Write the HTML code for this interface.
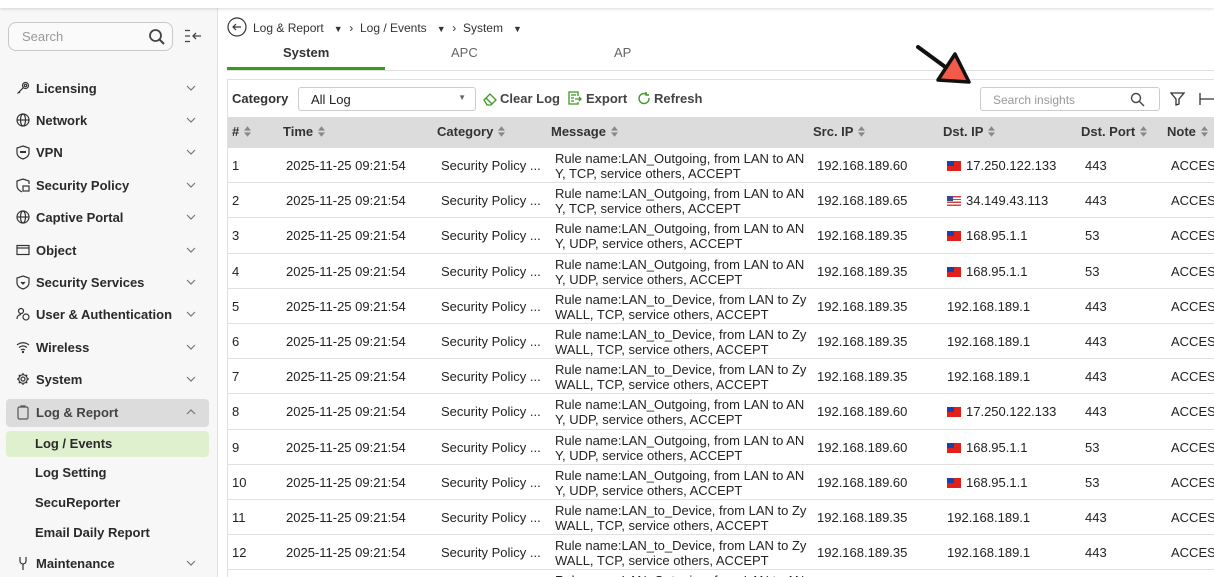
<!DOCTYPE html>
<html><head><meta charset="utf-8"><style>
*{box-sizing:border-box;margin:0;padding:0}
html,body{width:1214px;height:577px;overflow:hidden}
body{font-family:"Liberation Sans",Arial,sans-serif;background:#fff;position:relative;color:#222}
.top{position:absolute;left:0;top:0;width:1214px;height:8px;background:#fff;box-shadow:0 1px 3px rgba(0,0,0,.15);z-index:3}
.side{position:absolute;left:0;top:8px;width:218px;height:569px;background:#f7f7f7;border-right:1px solid #e2e2e2}
.sb{position:absolute;left:8px;top:22px;width:165px;height:29px;border:1px solid #c8c8c8;border-radius:8px;background:#fafafa;font-size:13px;color:#999;padding:6px 13px}
.nav{position:absolute;left:16px;font-size:13px;font-weight:bold;color:#2a2a2a;width:184px;height:16px}
.nav>svg{position:absolute;left:0;top:0}
.nav span{position:absolute;left:20px}
.nav .ch{position:absolute;left:170px;top:4px}
.sub{position:absolute;left:35px;font-size:13px;font-weight:bold;color:#2a2a2a}
.a{position:absolute}
.th{position:absolute;top:117px;left:228px;width:986px;height:31px;background:#dcdcdc}
.h{position:absolute;top:124px;font-size:13px;font-weight:bold;color:#333}
.h svg{margin-left:5px;vertical-align:-1px}
.tbl{position:absolute;left:228px;top:148px;width:986px;height:429px;overflow:hidden}
.row{position:absolute;left:0;width:986px;height:35.2px;border-bottom:1px solid #e0e0e0;font-size:13px;color:#222}
.row div{position:absolute;white-space:nowrap}
.c1{left:4px;top:10px}.c2{left:58px;top:10px}.c3{left:213px;top:10px}.c4{left:327px;top:3px;line-height:15px}.c5{left:589px;top:10px}.c6{left:719px;top:10px}.c7{left:857px;top:10px}.c8{left:943px;top:10px}
.fl{display:inline-block;width:14px;height:10px;vertical-align:-1px;margin-right:5px}
.tw{background:#e0201b;position:relative}
.tw:before{content:"";position:absolute;left:0;top:0;width:7px;height:5px;background:#1d3fa8}
.us{background:repeating-linear-gradient(#d04040 0 1.4px,#fff 1.4px 2.8px);position:relative}
.us:before{content:"";position:absolute;left:0;top:0;width:6px;height:5px;background:#3a4a8a}
</style></head><body>
<svg width="0" height="0" style="position:absolute"><defs>
<symbol id="cd" viewBox="0 0 10 6"><path d="M1 1l4 4 4-4" fill="none" stroke="#777" stroke-width="1.2"/></symbol>
<symbol id="so" viewBox="0 0 8 12"><path d="M4 0L8 5H0z M4 12L8 7H0z" fill="#888"/></symbol>
</defs></svg>
<div class="top"></div>
<div class="side"></div>
<div class="sb">Search
<svg style="position:absolute;right:6px;top:5px" width="18" height="18" viewBox="0 0 18 18"><circle cx="7.5" cy="7.5" r="5.5" fill="none" stroke="#444" stroke-width="1.8"/><path d="M11.5 11.5L16 16" stroke="#444" stroke-width="2"/></svg></div>
<svg class="a" style="left:184px;top:29px" width="20" height="14" viewBox="0 0 20 14"><path d="M1 1.5h5M1 7h5M1 12.5h5" stroke="#444" stroke-width="1.3"/><path d="M9 7h8M12 4l-3 3 3 3" stroke="#444" stroke-width="1.3" fill="none"/></svg>

<div class="nav" style="top:81px"><svg width="14" height="14" viewBox="0 0 14 14" fill="none" stroke="#333" stroke-width="1.2"><circle cx="9.5" cy="4.5" r="3"/><circle cx="9.5" cy="4.5" r="1.2"/><path d="M7.3 6.7L1.5 12.5M3 11l1 1"/></svg><span>Licensing</span><svg class="ch" width="10" height="6"><use href="#cd"/></svg></div>
<div class="nav" style="top:113px"><svg width="14" height="14" viewBox="0 0 14 14" fill="none" stroke="#333" stroke-width="1.2"><circle cx="7" cy="7" r="6"/><ellipse cx="7" cy="7" rx="2.5" ry="6"/><path d="M1 7h12"/></svg><span>Network</span><svg class="ch" width="10" height="6"><use href="#cd"/></svg></div>
<div class="nav" style="top:145px"><svg width="14" height="15" viewBox="0 0 14 15" fill="none" stroke="#333" stroke-width="1.2"><path d="M7 1l6 2v5c0 3-3 5-6 6-3-1-6-3-6-6V3z"/><path d="M4 7h6" stroke-width="2"/></svg><span>VPN</span><svg class="ch" width="10" height="6"><use href="#cd"/></svg></div>
<div class="nav" style="top:178px"><svg width="14" height="15" viewBox="0 0 14 15" fill="none" stroke="#333" stroke-width="1.2"><path d="M7 1l6 2v3M7 1L1 3v5c0 3 3 5 5 6"/><rect x="7" y="8" width="6" height="5"/></svg><span>Security Policy</span><svg class="ch" width="10" height="6"><use href="#cd"/></svg></div>
<div class="nav" style="top:210px"><svg width="14" height="14" viewBox="0 0 14 14" fill="none" stroke="#333" stroke-width="1.2"><circle cx="7" cy="7" r="6"/><ellipse cx="7" cy="7" rx="2.5" ry="6"/><path d="M1 7h12"/></svg><span>Captive Portal</span><svg class="ch" width="10" height="6"><use href="#cd"/></svg></div>
<div class="nav" style="top:243px"><svg width="14" height="14" viewBox="0 0 14 14" fill="none" stroke="#333" stroke-width="1.2"><rect x="1" y="2.5" width="12" height="9"/><path d="M1 5h12"/></svg><span>Object</span><svg class="ch" width="10" height="6"><use href="#cd"/></svg></div>
<div class="nav" style="top:275px"><svg width="14" height="15" viewBox="0 0 14 15" fill="none" stroke="#333" stroke-width="1.2"><path d="M7 1l6 2v5c0 3-3 5-6 6-3-1-6-3-6-6V3z"/><path d="M5 7l2 2 2-2" fill="#333"/></svg><span>Security Services</span><svg class="ch" width="10" height="6"><use href="#cd"/></svg></div>
<div class="nav" style="top:307px"><svg width="14" height="14" viewBox="0 0 14 14" fill="none" stroke="#333" stroke-width="1.2"><circle cx="5" cy="4" r="2.5"/><path d="M1 12c0-3 2-4.5 4-4.5"/><circle cx="10" cy="10" r="3"/></svg><span>User &amp; Authentication</span><svg class="ch" width="10" height="6"><use href="#cd"/></svg></div>
<div class="nav" style="top:340px"><svg width="14" height="14" viewBox="0 0 14 14" fill="none" stroke="#333" stroke-width="1.2"><path d="M1 5c3.5-3 8.5-3 12 0M3 7.5c2.5-2 5.5-2 8 0M5 10c1-1 3-1 4 0"/><circle cx="7" cy="12" r=".6" fill="#333"/></svg><span>Wireless</span><svg class="ch" width="10" height="6"><use href="#cd"/></svg></div>
<div class="nav" style="top:372px"><svg width="14" height="14" viewBox="0 0 14 14" fill="none" stroke="#333" stroke-width="1.2"><circle cx="7" cy="7" r="2"/><path d="M7 1v2M7 11v2M1 7h2M11 7h2M2.8 2.8l1.4 1.4M9.8 9.8l1.4 1.4M2.8 11.2l1.4-1.4M9.8 4.2l1.4-1.4"/><circle cx="7" cy="7" r="4.3"/></svg><span>System</span><svg class="ch" width="10" height="6"><use href="#cd"/></svg></div>
<div class="a" style="left:6px;top:399px;width:203px;height:28px;background:#dcdcdc;border-radius:4px"></div>
<div class="nav" style="top:405px;color:#444"><svg width="14" height="15" viewBox="0 0 14 15" fill="none" stroke="#555" stroke-width="1.2"><rect x="2" y="2" width="10" height="12" rx="1.5"/><path d="M5 2V1h4v1"/></svg><span>Log &amp; Report</span><svg class="ch" width="10" height="6" style="transform:rotate(180deg)"><use href="#cd"/></svg></div>
<div class="a" style="left:6px;top:431px;width:203px;height:26px;background:#dff0cf;border-radius:4px"></div>
<div class="sub" style="top:436px">Log / Events</div>
<div class="sub" style="top:465px">Log Setting</div>
<div class="sub" style="top:495px">SecuReporter</div>
<div class="sub" style="top:525px">Email Daily Report</div>
<div class="nav" style="top:556px"><svg width="14" height="15" viewBox="0 0 14 15" fill="none" stroke="#333" stroke-width="1.2"><path d="M4 1v4a3 3 0 006 0V1M7 8v6"/></svg><span>Maintenance</span><svg class="ch" width="10" height="6"><use href="#cd"/></svg></div>

<svg class="a" style="left:227px;top:17px" width="20" height="20" viewBox="0 0 20 20" fill="none" stroke="#333" stroke-width="1.2"><circle cx="10" cy="10" r="9"/><path d="M14 10H6M9 7l-3 3 3 3"/></svg>
<div class="a" style="left:253px;top:21px;font-size:12px;color:#333;white-space:pre">Log &amp; Report   <span style="font-size:9px">▼</span>  ›  Log / Events   <span style="font-size:9px">▼</span>  ›  System   <span style="font-size:9px">▼</span></div>
<div class="a" style="left:283px;top:45px;font-size:13px;font-weight:bold;color:#333">System</div>
<div class="a" style="left:451px;top:45px;font-size:13px;color:#666">APC</div>
<div class="a" style="left:614px;top:45px;font-size:13px;color:#666">AP</div>
<div class="a" style="left:227px;top:70px;width:987px;height:1px;background:#e0e0e0"></div>
<div class="a" style="left:227px;top:67px;width:158px;height:3px;background:#3a9a1a"></div>
<div class="a" style="left:227px;top:79px;width:987px;height:498px;border:1px solid #e0e0e0;border-right:none;border-bottom:none"></div>
<svg class="a" style="left:912px;top:42px;z-index:2" width="65" height="50" viewBox="0 0 65 50"><path d="M6 5L36 27" stroke="#111" stroke-width="4" stroke-linecap="round"/><path d="M26 38L43 12L57 40Z" fill="#f45a4a" stroke="#111" stroke-width="3.5" stroke-linejoin="round"/></svg>

<div class="a" style="left:232px;top:91px;font-size:13px;font-weight:bold;color:#333">Category</div>
<div class="a" style="left:298px;top:87px;width:178px;height:24px;border:1px solid #ccc;border-radius:3px;font-size:13px;padding:4px 12px">All Log<span style="position:absolute;right:9px;top:5px;font-size:8px;color:#666">▼</span></div>
<svg class="a" style="left:483px;top:92px" width="14" height="14" viewBox="0 0 14 14" fill="none" stroke="#3a9a1a" stroke-width="1.3"><path d="M1 8l6-6 6 6-5 5H4z M3 6l6 6"/></svg>
<div class="a" style="left:500px;top:91px;font-size:13px;font-weight:bold;color:#444">Clear Log</div>
<svg class="a" style="left:568px;top:91px" width="14" height="14" viewBox="0 0 14 14" fill="none" stroke="#3a9a1a" stroke-width="1.3"><path d="M10 5V1H1v12h9v-2M3 4h5M3 7h3M3 10h3M7 8h6M11 6l2 2-2 2"/></svg>
<div class="a" style="left:586px;top:91px;font-size:13px;font-weight:bold;color:#444">Export</div>
<svg class="a" style="left:637px;top:91px" width="14" height="14" viewBox="0 0 14 14" fill="none" stroke="#3a9a1a" stroke-width="1.4"><path d="M10 3.5A5 5 0 1 0 12 7M9 1v3h3"/></svg>
<div class="a" style="left:654px;top:91px;font-size:13px;font-weight:bold;color:#444">Refresh</div>
<div class="a" style="left:980px;top:87px;width:180px;height:24px;border:1px solid #ccc;border-radius:3px;font-size:12px;color:#999;padding:5px 12px">Search insights<svg style="position:absolute;right:14px;top:4px" width="15" height="15" viewBox="0 0 15 15" fill="none" stroke="#444" stroke-width="1.4"><circle cx="6" cy="6" r="4.5"/><path d="M9.5 9.5L14 14"/></svg></div>
<svg class="a" style="left:1170px;top:92px" width="15" height="14" viewBox="0 0 15 14" fill="none" stroke="#333" stroke-width="1.3"><path d="M1 1h13L9 7v5l-3 1V7z"/></svg>
<svg class="a" style="left:1199px;top:92px" width="15" height="14" viewBox="0 0 15 14" fill="none" stroke="#333" stroke-width="1.3"><path d="M1 1v12M1 7h14"/></svg>

<div class="th"></div>
<div class="h" style="left:232px">#<svg width="7" height="11"><use href="#so"/></svg></div>
<div class="h" style="left:283px">Time<svg width="7" height="11"><use href="#so"/></svg></div>
<div class="h" style="left:437px">Category<svg width="7" height="11"><use href="#so"/></svg></div>
<div class="h" style="left:551px">Message<svg width="7" height="11"><use href="#so"/></svg></div>
<div class="h" style="left:813px">Src. IP<svg width="7" height="11"><use href="#so"/></svg></div>
<div class="h" style="left:943px">Dst. IP<svg width="7" height="11"><use href="#so"/></svg></div>
<div class="h" style="left:1081px">Dst. Port<svg width="7" height="11"><use href="#so"/></svg></div>
<div class="h" style="left:1167px">Note<svg width="7" height="11"><use href="#so"/></svg></div>

<div class="tbl">
<div class="row" style="top:0px"><div class="c1">1</div><div class="c2">2025-11-25 09:21:54</div><div class="c3">Security Policy ...</div><div class="c4">Rule name:LAN_Outgoing, from LAN to AN<br>Y, TCP, service others, ACCEPT</div><div class="c5">192.168.189.60</div><div class="c6"><span class="fl tw"></span>17.250.122.133</div><div class="c7">443</div><div class="c8">ACCES</div></div>
<div class="row" style="top:35.2px"><div class="c1">2</div><div class="c2">2025-11-25 09:21:54</div><div class="c3">Security Policy ...</div><div class="c4">Rule name:LAN_Outgoing, from LAN to AN<br>Y, TCP, service others, ACCEPT</div><div class="c5">192.168.189.65</div><div class="c6"><span class="fl us"></span>34.149.43.113</div><div class="c7">443</div><div class="c8">ACCES</div></div>
<div class="row" style="top:70.4px"><div class="c1">3</div><div class="c2">2025-11-25 09:21:54</div><div class="c3">Security Policy ...</div><div class="c4">Rule name:LAN_Outgoing, from LAN to AN<br>Y, UDP, service others, ACCEPT</div><div class="c5">192.168.189.35</div><div class="c6"><span class="fl tw"></span>168.95.1.1</div><div class="c7">53</div><div class="c8">ACCES</div></div>
<div class="row" style="top:105.6px"><div class="c1">4</div><div class="c2">2025-11-25 09:21:54</div><div class="c3">Security Policy ...</div><div class="c4">Rule name:LAN_Outgoing, from LAN to AN<br>Y, UDP, service others, ACCEPT</div><div class="c5">192.168.189.35</div><div class="c6"><span class="fl tw"></span>168.95.1.1</div><div class="c7">53</div><div class="c8">ACCES</div></div>
<div class="row" style="top:140.8px"><div class="c1">5</div><div class="c2">2025-11-25 09:21:54</div><div class="c3">Security Policy ...</div><div class="c4">Rule name:LAN_to_Device, from LAN to Zy<br>WALL, TCP, service others, ACCEPT</div><div class="c5">192.168.189.35</div><div class="c6">192.168.189.1</div><div class="c7">443</div><div class="c8">ACCES</div></div>
<div class="row" style="top:176px"><div class="c1">6</div><div class="c2">2025-11-25 09:21:54</div><div class="c3">Security Policy ...</div><div class="c4">Rule name:LAN_to_Device, from LAN to Zy<br>WALL, TCP, service others, ACCEPT</div><div class="c5">192.168.189.35</div><div class="c6">192.168.189.1</div><div class="c7">443</div><div class="c8">ACCES</div></div>
<div class="row" style="top:211.2px"><div class="c1">7</div><div class="c2">2025-11-25 09:21:54</div><div class="c3">Security Policy ...</div><div class="c4">Rule name:LAN_to_Device, from LAN to Zy<br>WALL, TCP, service others, ACCEPT</div><div class="c5">192.168.189.35</div><div class="c6">192.168.189.1</div><div class="c7">443</div><div class="c8">ACCES</div></div>
<div class="row" style="top:246.4px"><div class="c1">8</div><div class="c2">2025-11-25 09:21:54</div><div class="c3">Security Policy ...</div><div class="c4">Rule name:LAN_Outgoing, from LAN to AN<br>Y, UDP, service others, ACCEPT</div><div class="c5">192.168.189.60</div><div class="c6"><span class="fl tw"></span>17.250.122.133</div><div class="c7">443</div><div class="c8">ACCES</div></div>
<div class="row" style="top:281.6px"><div class="c1">9</div><div class="c2">2025-11-25 09:21:54</div><div class="c3">Security Policy ...</div><div class="c4">Rule name:LAN_Outgoing, from LAN to AN<br>Y, UDP, service others, ACCEPT</div><div class="c5">192.168.189.60</div><div class="c6"><span class="fl tw"></span>168.95.1.1</div><div class="c7">53</div><div class="c8">ACCES</div></div>
<div class="row" style="top:316.8px"><div class="c1">10</div><div class="c2">2025-11-25 09:21:54</div><div class="c3">Security Policy ...</div><div class="c4">Rule name:LAN_Outgoing, from LAN to AN<br>Y, UDP, service others, ACCEPT</div><div class="c5">192.168.189.60</div><div class="c6"><span class="fl tw"></span>168.95.1.1</div><div class="c7">53</div><div class="c8">ACCES</div></div>
<div class="row" style="top:352px"><div class="c1">11</div><div class="c2">2025-11-25 09:21:54</div><div class="c3">Security Policy ...</div><div class="c4">Rule name:LAN_to_Device, from LAN to Zy<br>WALL, TCP, service others, ACCEPT</div><div class="c5">192.168.189.35</div><div class="c6">192.168.189.1</div><div class="c7">443</div><div class="c8">ACCES</div></div>
<div class="row" style="top:387.2px"><div class="c1">12</div><div class="c2">2025-11-25 09:21:54</div><div class="c3">Security Policy ...</div><div class="c4">Rule name:LAN_to_Device, from LAN to Zy<br>WALL, TCP, service others, ACCEPT</div><div class="c5">192.168.189.35</div><div class="c6">192.168.189.1</div><div class="c7">443</div><div class="c8">ACCES</div></div>
<div class="row" style="top:422.4px"><div class="c4">Rule name:LAN_Outgoing, from LAN to AN</div></div>
</div>
</body></html>
